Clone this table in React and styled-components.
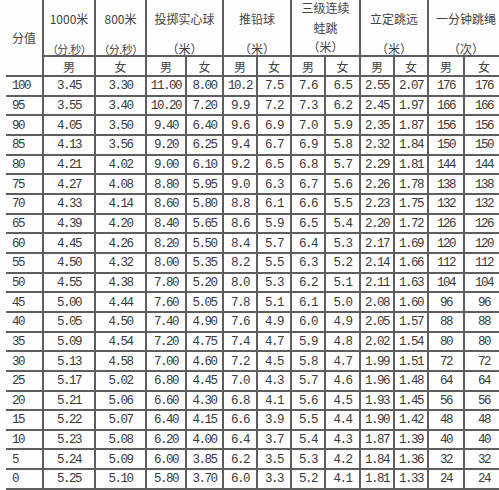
import React from "react";
import styled, { createGlobalStyle } from "styled-components";

const GlobalStyle = createGlobalStyle`
  html, body {
    margin: 0;
    padding: 0;
    background: #fff;
  }
  body {
    width: 499px;
    height: 490px;
    overflow: hidden;
  }
`;

const Sheet = styled.div`
  width: 499px;
  height: 490px;
  overflow: hidden;
  background: #fdfdfd;
`;

const Table = styled.div`
  display: grid;
  width: 505px;
  margin-left: 6px;
  grid-template-columns: 38px 52px 51px 40px 37px 34px 34px 34px 35px 34px 34px 36px 40px;
  grid-template-rows: 57px 20px repeat(21, 19.67px);
`;

const Cell = styled.div`
  box-sizing: border-box;
  border-right: 2px solid #5e5e5e;
  border-bottom: 2px solid #5e5e5e;
  grid-column: span ${({ $span }) => $span || 1};
  grid-row: span ${({ $rows }) => $rows || 1};
  display: flex;
  align-items: center;
  justify-content: ${({ $left }) => ($left ? "flex-start" : "center")};
  padding-left: ${({ $left }) => ($left ? "6px" : "0")};
  color: #3a3a3a;
  white-space: nowrap;
`;

const HeadCell = styled(Cell)`
  flex-direction: column;
  justify-content: flex-start;
  align-items: center;
  padding-top: ${({ $tight }) => ($tight ? "0" : "11px")};
  gap: ${({ $tight }) => ($tight ? "3.5px" : "14px")};
  font-family: "Noto Sans CJK SC", "Noto Sans", sans-serif;
  font-size: 12px;
  line-height: 16px;
  color: #444;
`;

const Label = styled(Cell)`
  font-family: "Noto Sans CJK SC", "Noto Sans", sans-serif;
  font-size: 12px;
  color: #444;
`;

const Num = styled(Cell)`
  font-family: "Liberation Mono", "DejaVu Sans Mono", monospace;
  font-size: 12.5px;
  letter-spacing: -1.45px;
  padding-top: 1px;
`;

const Unit = styled.span`
  font-size: ${({ $narrow }) => ($narrow ? "11px" : "12px")};
  letter-spacing: ${({ $narrow }) => ($narrow ? "-0.6px" : "0")};
`;

const events = [
  { title: ["1000米"], unit: "（分.秒）", span: 1 },
  { title: ["800米"], unit: "（分.秒）", span: 1 },
  { title: ["投掷实心球"], unit: "（米）", span: 2 },
  { title: ["推铅球"], unit: "（米）", span: 2 },
  { title: ["三级连续", "蛙跳"], unit: "（米）", span: 2 },
  { title: ["立定跳远"], unit: "（米）", span: 2 },
  { title: ["一分钟跳绳"], unit: "（次）", span: 2 },
];

const genders = ["男", "女", "男", "女", "男", "女", "男", "女", "男", "女", "男", "女"];

const rows = [
  ["100", "3.45", "3.30", "11.00", "8.00", "10.2", "7.5", "7.6", "6.5", "2.55", "2.07", "176", "176"],
  ["95", "3.55", "3.40", "10.20", "7.20", "9.9", "7.2", "7.3", "6.2", "2.45", "1.97", "166", "166"],
  ["90", "4.05", "3.50", "9.40", "6.40", "9.6", "6.9", "7.0", "5.9", "2.35", "1.87", "156", "156"],
  ["85", "4.13", "3.56", "9.20", "6.25", "9.4", "6.7", "6.9", "5.8", "2.32", "1.84", "150", "150"],
  ["80", "4.21", "4.02", "9.00", "6.10", "9.2", "6.5", "6.8", "5.7", "2.29", "1.81", "144", "144"],
  ["75", "4.27", "4.08", "8.80", "5.95", "9.0", "6.3", "6.7", "5.6", "2.26", "1.78", "138", "138"],
  ["70", "4.33", "4.14", "8.60", "5.80", "8.8", "6.1", "6.6", "5.5", "2.23", "1.75", "132", "132"],
  ["65", "4.39", "4.20", "8.40", "5.65", "8.6", "5.9", "6.5", "5.4", "2.20", "1.72", "126", "126"],
  ["60", "4.45", "4.26", "8.20", "5.50", "8.4", "5.7", "6.4", "5.3", "2.17", "1.69", "120", "120"],
  ["55", "4.50", "4.32", "8.00", "5.35", "8.2", "5.5", "6.3", "5.2", "2.14", "1.66", "112", "112"],
  ["50", "4.55", "4.38", "7.80", "5.20", "8.0", "5.3", "6.2", "5.1", "2.11", "1.63", "104", "104"],
  ["45", "5.00", "4.44", "7.60", "5.05", "7.8", "5.1", "6.1", "5.0", "2.08", "1.60", "96", "96"],
  ["40", "5.05", "4.50", "7.40", "4.90", "7.6", "4.9", "6.0", "4.9", "2.05", "1.57", "88", "88"],
  ["35", "5.09", "4.54", "7.20", "4.75", "7.4", "4.7", "5.9", "4.8", "2.02", "1.54", "80", "80"],
  ["30", "5.13", "4.58", "7.00", "4.60", "7.2", "4.5", "5.8", "4.7", "1.99", "1.51", "72", "72"],
  ["25", "5.17", "5.02", "6.80", "4.45", "7.0", "4.3", "5.7", "4.6", "1.96", "1.48", "64", "64"],
  ["20", "5.21", "5.06", "6.60", "4.30", "6.8", "4.1", "5.6", "4.5", "1.93", "1.45", "56", "56"],
  ["15", "5.22", "5.07", "6.40", "4.15", "6.6", "3.9", "5.5", "4.4", "1.90", "1.42", "48", "48"],
  ["10", "5.23", "5.08", "6.20", "4.00", "6.4", "3.7", "5.4", "4.3", "1.87", "1.39", "40", "40"],
  ["5", "5.24", "5.09", "6.00", "3.85", "6.2", "3.5", "5.3", "4.2", "1.84", "1.36", "32", "32"],
  ["0", "5.25", "5.10", "5.80", "3.70", "6.0", "3.3", "5.2", "4.1", "1.81", "1.33", "24", "24"],
];

export default function App() {
  return (
    <>
      <GlobalStyle />
      <Sheet>
        <Table>
          <Label $rows={2}>分值</Label>
          {events.map((ev) => (
            <HeadCell key={ev.title.join("")} $span={ev.span} $tight={ev.title.length > 1}>
              {ev.title.map((t) => (
                <span key={t}>{t}</span>
              ))}
              <Unit $narrow={ev.unit.includes(".")}>{ev.unit}</Unit>
            </HeadCell>
          ))}
          {genders.map((g, i) => (
            <Label key={"g" + i}>{g}</Label>
          ))}
          {rows.map((row) =>
            row.map((v, i) => (
              <Num key={row[0] + "-" + i} $left={i === 0}>
                {v}
              </Num>
            ))
          )}
        </Table>
      </Sheet>
    </>
  );
}
